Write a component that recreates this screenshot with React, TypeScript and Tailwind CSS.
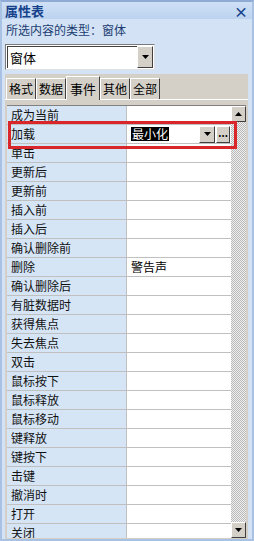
const rows: [string, string][] = [
  ["成为当前", ""],
  ["加载", "最小化"],
  ["单击", ""],
  ["更新后", ""],
  ["更新前", ""],
  ["插入前", ""],
  ["插入后", ""],
  ["确认删除前", ""],
  ["删除", "警告声"],
  ["确认删除后", ""],
  ["有脏数据时", ""],
  ["获得焦点", ""],
  ["失去焦点", ""],
  ["双击", ""],
  ["鼠标按下", ""],
  ["鼠标释放", ""],
  ["鼠标移动", ""],
  ["键释放", ""],
  ["键按下", ""],
  ["击键", ""],
  ["撤消时", ""],
  ["打开", ""],
  ["关闭", ""],
];

const tabs = ["格式", "数据", "事件", "其他", "全部"];

function Arrow({ up }: { up?: boolean }) {
  return (
    <svg width="7" height="4" viewBox="0 0 7 4">
      <path d={up ? "M0 4 L3.5 0 L7 4 Z" : "M0 0 L7 0 L3.5 4 Z"} fill="#000" />
    </svg>
  );
}

function Btn({ children, className = "" }: { children: React.ReactNode; className?: string }) {
  return (
    <div
      className={`flex items-center justify-center bg-[#d4d0c8] border border-t-white border-l-white border-r-[#404040] border-b-[#404040] ${className}`}
    >
      {children}
    </div>
  );
}

export default function App() {
  return (
    <div
      className="w-[254px] h-[541px] overflow-hidden flex flex-col bg-[#d3e2f4] border-t-2 border-t-[#8eaad5] border-l-2 border-l-[#a9c1e3] border-r-2 border-r-[#a9c1e3] border-b-2 border-b-[#a9c1e3] text-[12px] text-black"
      style={{ fontFamily: '"Noto Sans CJK SC", "Noto Sans", sans-serif' }}
    >
      {/* TITLE */}
      <div className="h-[17px] shrink-0 flex items-center justify-between pl-[3px] pr-[4px] bg-gradient-to-b from-[#cfe0f5] to-[#bcd3ef]">
        <span className="font-bold text-[13px] text-[#15428b] leading-none">属性表</span>
        <span className="font-bold text-[14px] text-[#15428b] leading-none">×</span>
      </div>

      {/* TYPE */}
      <div className="h-[22px] shrink-0 flex items-center pl-[4px] text-[#1a3d72] leading-none">
        所选内容的类型：窗体
      </div>

      {/* COMBO */}
      <div className="mt-[3px] ml-[3px] w-[150px] h-[26px] shrink-0 flex bg-white border border-[#7a7a7a] border-r-[#e0e0e0] border-b-[#e0e0e0] p-[1px]">
        <div className="flex-1 flex items-center pl-[2px] border-t border-l border-[#404040] text-[13px]">窗体</div>
        <Btn className="w-[16px] border-t border-l">
          <Arrow />
        </Btn>
      </div>

      {/* TABS */}
      <div className="mt-[4px] ml-[3px] mr-[4px] flex-1 min-h-0 flex flex-col bg-[#d4d0c8]">
        <div className="h-[25px] shrink-0 flex items-end pl-[1px]">
          {tabs.map((t) =>
            t === "事件" ? (
              <div
                key={t}
                className="h-[24px] px-[3px] flex items-center bg-[#d4d0c8] border-t border-l border-white border-r border-r-[#404040] text-[13px] leading-none -mb-[1px] z-10"
              >
                {t}
              </div>
            ) : (
              <div
                key={t}
                className="h-[21px] px-[2px] flex items-center border-t border-l border-white border-r border-r-[#404040] leading-none"
              >
                {t}
              </div>
            )
          )}
        </div>

        <div className="flex-1 min-h-0 flex flex-col border-t border-white px-[2px] pt-[5px] pb-[1px]">
          <div className="relative flex-1 min-h-0 flex overflow-hidden bg-white border-t border-[#808080]">
            <div className="flex-1 flex flex-col">
              {rows.map(([label, value], i) => (
                <div key={label} className="h-[19px] shrink-0 flex border-b border-[#c0c0c0]">
                  <div className="w-[120px] bg-[#d6e5f6] border-r border-[#c0c0c0] pl-[4px] flex items-center leading-none text-[#111]">
                    {label}
                  </div>
                  {i === 1 ? (
                    <div className="flex-1 flex items-center pl-[4px] pr-[1px]">
                      <span className="bg-black text-white leading-none px-[1px] py-[1px]">{value}</span>
                      <span className="flex-1" />
                      <Btn className="w-[16px] h-[17px]">
                        <Arrow />
                      </Btn>
                      <Btn className="w-[14px] h-[17px] ml-[1px] text-[10px] font-bold leading-none pb-[3px]">...</Btn>
                    </div>
                  ) : (
                    <div className="flex-1 flex items-center pl-[4px] leading-none">{value}</div>
                  )}
                </div>
              ))}
            </div>
            <div className="w-[15px] flex flex-col bg-[repeating-conic-gradient(#b8b8b8_0_25%,#f0f0f0_0_50%)] bg-[length:2px_2px]">
              <Btn className="h-[16px]">
                <Arrow up />
              </Btn>
              <div className="flex-1" />
              <Btn className="h-[16px]">
                <Arrow />
              </Btn>
            </div>
            <div className="absolute left-[1px] top-[15px] w-[229px] h-[28px] border-[3px] border-[#d9262a] pointer-events-none" />
          </div>
        </div>
      </div>
    </div>
  );
}
